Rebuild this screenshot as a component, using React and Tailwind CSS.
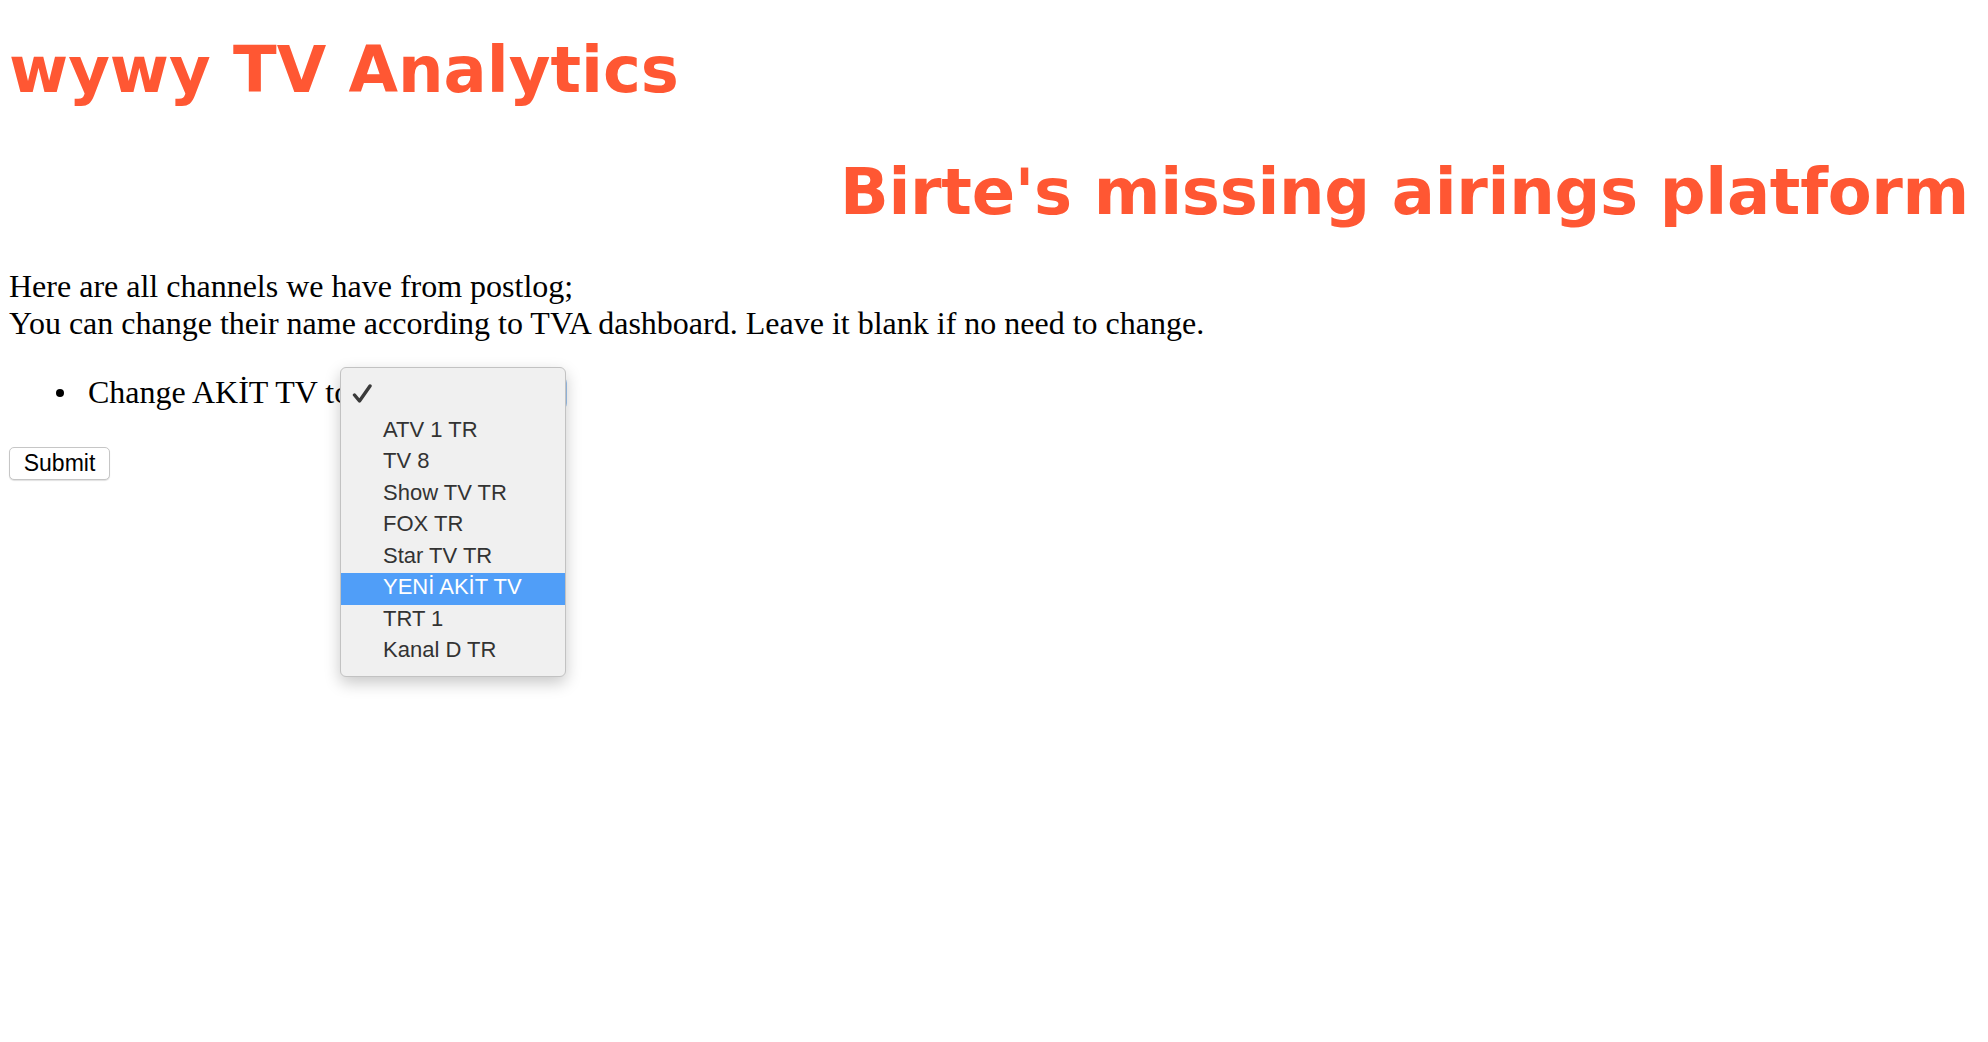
import React from "react";

const options = [
  "",
  "ATV 1 TR",
  "TV 8",
  "Show TV TR",
  "FOX TR",
  "Star TV TR",
  "YENİ AKİT TV",
  "TRT 1",
  "Kanal D TR",
];

export default function App() {
  return (
    <div className="relative min-h-screen w-full bg-white pl-[9px] text-black">
      <h1 className="mt-0 pt-[33px] font-['DejaVu_Sans',Verdana,sans-serif] text-[64px] font-bold leading-[74px] text-[#ff5733]">
        wywy TV Analytics
      </h1>
      <h2 className="mt-[48px] pr-[19px] text-right font-['DejaVu_Sans',Verdana,sans-serif] text-[64px] font-bold leading-[74px] tracking-[-0.3px] text-[#ff5733]">
        Birte's missing airings platform
      </h2>
      <form className="font-['Liberation_Serif','Times_New_Roman',serif] text-[32px] leading-[37px]">
        <p className="mt-[39px]">
          Here are all channels we have from postlog;
          <br />
          You can change their name according to TVA dashboard. Leave it blank if no need to change.
        </p>
        <ul className="mt-[32px]">
          <li className="flex h-[37px] items-center">
            <span className="ml-[47px] h-[8px] w-[8px] rounded-full bg-black" />
            <span className="ml-[24px] whitespace-pre">Change AKİT TV to </span>
            <span className="h-[30px] w-[207px] rounded-[5px] border border-[#aaa] bg-white shadow-[0_0_0_2px_#9dc3ee]" />
          </li>
        </ul>
        <button
          type="button"
          className="mt-[36px] flex h-[33px] w-[101px] items-center justify-center rounded-[5px] border border-[#c6c6c6] bg-white font-['Liberation_Sans',Arial,sans-serif] text-[23px] leading-none text-black shadow-[0_1px_1px_rgba(0,0,0,0.12)]"
        >
          Submit
        </button>
      </form>

      <div className="absolute left-[340px] top-[367px] w-[226px] rounded-[6px] border border-[#c2c2c2] bg-[#f0f0f0] pb-[8px] pt-[15px] font-['Liberation_Sans',Arial,sans-serif] text-[22px] leading-[27px] text-[#333] shadow-[0_6px_16px_rgba(0,0,0,0.22)]">
        {options.map((o, i) => (
          <div
            key={i}
            className={
              i === 6
                ? "h-[31.5px] bg-[#509ef8] pl-[42px] text-white"
                : "relative h-[31.5px] pl-[42px]"
            }
          >
            {i === 0 ? (
              <svg
                className="ml-[-31px] mt-[1px]"
                width="20"
                height="20"
                viewBox="0 0 20 20"
              >
                <path
                  d="M2.5 11 L7.5 17 L18 2"
                  fill="none"
                  stroke="#3a3a3a"
                  strokeWidth="3.4"
                  strokeLinecap="round"
                  strokeLinejoin="round"
                />
              </svg>
            ) : (
              o
            )}
          </div>
        ))}
      </div>
    </div>
  );
}
